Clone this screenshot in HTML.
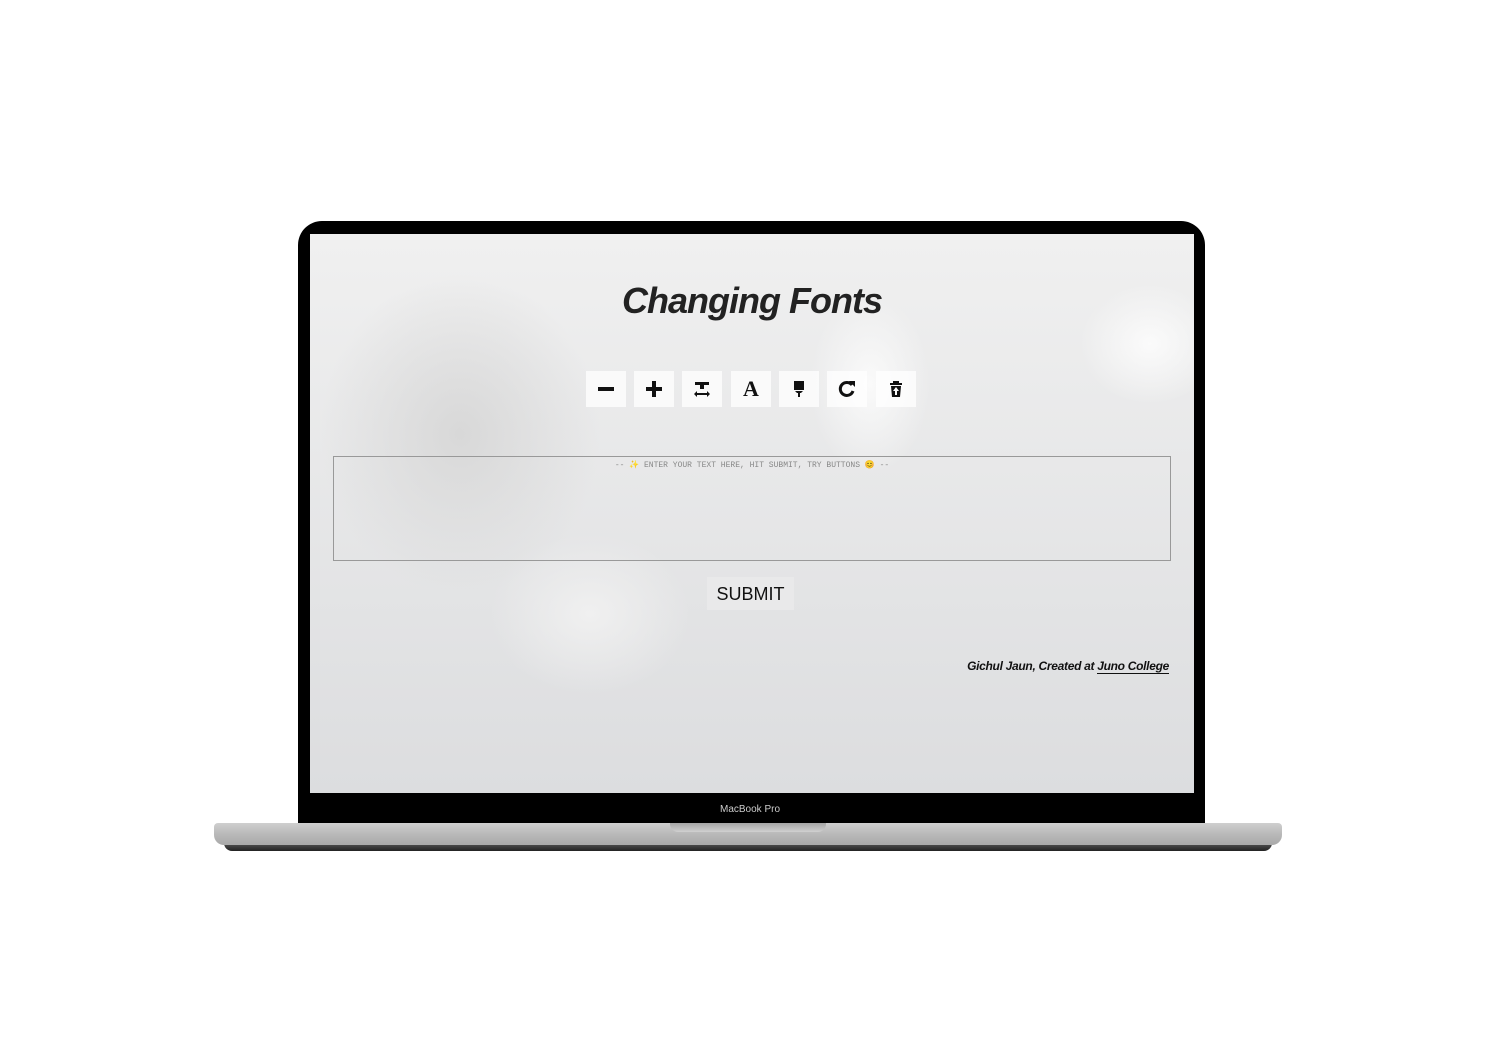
<!DOCTYPE html>
<html><head><style>
body{margin:0;width:1500px;height:1038px;background:#fff;position:relative;overflow:hidden;font-family:"Liberation Sans",sans-serif}
.bezel{position:absolute;left:298px;top:221px;width:907px;height:604px;background:#000;border-radius:24px 24px 0 0}
.screen{position:absolute;left:310px;top:234px;width:884px;height:559px;overflow:hidden;
background:radial-gradient(ellipse 60px 90px at 560px 150px,#fafafa,transparent),radial-gradient(ellipse 70px 60px at 840px 110px,#fbfbfb,transparent),radial-gradient(ellipse 140px 160px at 150px 200px,#d8d8d8,transparent),radial-gradient(ellipse 100px 80px at 280px 380px,#f0f0f0,transparent),linear-gradient(#f0f0f0,#dcdddf)}
h1{position:absolute;left:0;width:884px;top:46px;margin:0;text-align:center;font-style:italic;font-weight:bold;font-size:36px;letter-spacing:-1px;color:#222}
.b{position:absolute;top:137px;width:40px;height:36px;background:rgba(255,255,255,.75);display:flex;align-items:center;justify-content:center}
.ta{position:absolute;left:23px;top:222px;width:838px;height:105px;border:1px solid #999;font-family:"Liberation Mono",monospace;font-size:8px;color:#888;text-align:center;padding-top:3px;box-sizing:border-box}
.sub{position:absolute;left:397px;top:343px;width:87px;height:33px;background:#e9e9ea;font-size:18px;color:#111;text-align:center;line-height:34px}
.ft{position:absolute;right:25px;top:425px;font-size:12px;letter-spacing:-0.3px;font-weight:bold;font-style:italic;color:#111}
.ft u{text-decoration:none;border-bottom:1px solid #111}
.base{position:absolute;left:214px;top:823px;width:1068px;height:22px;background:linear-gradient(#cfcfcf,#b9b9b9 50%,#a9a9a9);border-radius:4px 4px 10px 10px}
.foot{position:absolute;left:224px;top:843px;width:1048px;height:8px;background:linear-gradient(#555,#222);border-radius:0 0 20px 20px}
.notch{position:absolute;left:670px;top:823px;width:156px;height:9px;background:linear-gradient(#a5a5a5,#d0d0d0);border-radius:0 0 8px 8px}
</style></head><body>
<div class="bezel"></div>
<div class="screen">
<h1>Changing Fonts</h1>
<div class="b" style="left:276px"><svg width="18" height="18"><rect x="1" y="7" width="16" height="4" fill="#111"/></svg></div>
<div class="b" style="left:324px"><svg width="18" height="18"><rect x="1" y="7" width="16" height="4" fill="#111"/><rect x="7" y="1" width="4" height="16" fill="#111"/></svg></div>
<div class="b" style="left:372px"><svg width="18" height="18"><path d="M2 2h14v3h-5v4h-4V5H2z M4 11l-3 3 3 3v-2h10v2l3-3-3-3v2H4z" fill="#111"/></svg></div>
<div class="b" style="left:421px"><span style="font:bold 22px 'Liberation Serif',serif;color:#111">A</span></div>
<div class="b" style="left:469px"><svg width="18" height="18"><path d="M4 1h10v9H4z M5 11h8l-2 2h-4z M8 13h2v4H8z" fill="#111"/></svg></div>
<div class="b" style="left:517px"><svg width="18" height="18"><path d="M14 5A6.5 6.5 0 1 0 15 11" stroke="#111" stroke-width="3" fill="none"/><path d="M11 1h6v6z" fill="#111"/></svg></div>
<div class="b" style="left:566px"><svg width="18" height="18"><path d="M3 3h12v2H3z M6 1h6v2H6z M4 6h10l-1 11H5z" fill="#111"/><path d="M9 7l3 4h-2v4H8v-4H6z" fill="#fff"/></svg></div>
<div class="ta">-- ✨ ENTER YOUR TEXT HERE, HIT SUBMIT, TRY BUTTONS 😊 --</div>
<div class="sub">SUBMIT</div>
<div class="ft">Gichul Jaun, Created at <u>Juno College</u></div>
</div>
<div style="position:absolute;left:700px;top:804px;width:100px;text-align:center;color:#ccc;font-size:10px">MacBook Pro</div>
<div class="foot"></div>
<div class="base"></div>
<div class="notch"></div>
</body></html>
